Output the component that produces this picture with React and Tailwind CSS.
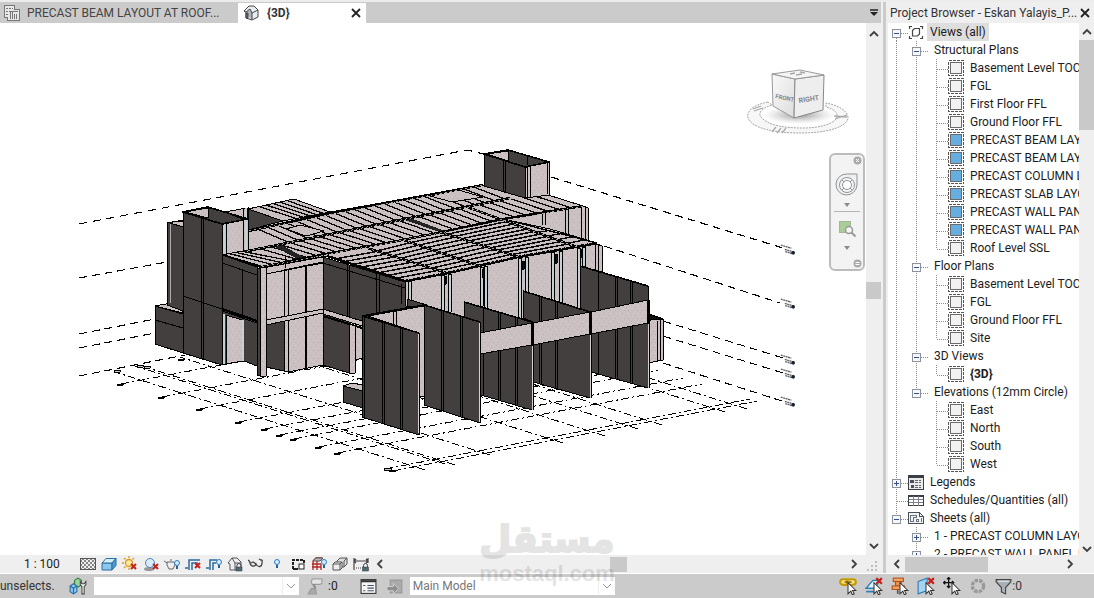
import React from "react";

const DARK = "#433f3e";
const LIGHT = "url(#concrete)";
const STEEL = "#c5d0d2";

const lerp = (a, b, t) => [a[0] + (b[0] - a[0]) * t, a[1] + (b[1] - a[1]) * t];

function Face({ p, fill = DARK }) {
  return <polygon points={p} fill={fill} stroke="#000" strokeWidth="1" />;
}

/* Evenly spaced joints between edge a-b and edge c-d */
function Ribs({ a, b, c, d, n, w = 1.3 }) {
  let path = "";
  for (let i = 1; i < n; i++) {
    const p = lerp(a, b, i / n);
    const q = lerp(c, d, i / n);
    path += `M${p[0]} ${p[1]}L${q[0]} ${q[1]}`;
  }
  return <path d={path} stroke="#0b0b0b" strokeWidth={w} fill="none" />;
}

const gridHeads = [
  [121, 384], [162, 397], [200, 409], [239, 422], [265, 429],
  [280, 435], [294, 439], [319, 447], [338, 453],
];
const gridEnds = [
  [425, 470], [445, 464], [455, 465], [490, 455], [563, 443],
  [605, 436], [638, 429], [662, 425], [725, 412], [747, 409],
];
const levelTags = [[787, 249], [787, 303], [787, 359], [787, 373], [787, 401]];

const columns = [
  [408, 281, 304], [441, 275, 310], [448, 274, 312], [480, 267, 306], [484, 266, 308],
  [518, 258, 318], [525, 257, 293], [551, 252, 300], [559, 251, 303], [577, 248, 308], [582, 247, 268],
];

function Model() {
  return (
    <svg className="block h-full w-full" viewBox="0 23 866 532" preserveAspectRatio="xMinYMin meet" role="img" aria-label="3D structural model">
      <defs>
        <pattern id="concrete" width="9" height="8" patternUnits="userSpaceOnUse">
          <rect width="9" height="8" fill="#cbc1c2" />
          <path d="M1 1h1v1h-1zM5 3h1v1h-1zM3 6h1v1h-1zM7 6h1v1h-1z" fill="#b9afb0" />
          <path d="M7 1h1v1h-1zM2 4h1v1h-1z" fill="#d6cccd" />
        </pattern>
      </defs>
      <g shapeRendering="crispEdges" strokeLinejoin="round">
        {/* level lines */}
        <g stroke="#000" strokeWidth="1.1" fill="none">
          <path d="M79 224L467 150L484 154" strokeDasharray="8 6" />
          <path d="M551 177L783 248M79 278L167 262M604 246L780 303M79 334L155 319M663 321L783 358M79 348L155 333M663 336L783 373M79 376L185 355M663 363L785 402" strokeDasharray="8 5" />
        </g>
        {/* grids */}
        <g stroke="#000" strokeWidth="1" fill="none" strokeDasharray="8 3 2 3">
          {gridHeads.map(([x, y]) => <path key={x} d={`M${x} ${y}l364 -69`} />)}
          {gridEnds.map(([x, y]) => <path key={x} d={`M${x} ${y}l-310 -98`} />)}
          <path d="M385 469L750 399M393 471L757 401" />
        </g>
        <g fill="#ccc" stroke="#000">
          {gridHeads.map(([x, y]) => <path key={x} d={`M${x - 4} ${y}h6v1h-6z`} />)}
          <path d="M384 468h7v2h-7zM389 470h7v1h-7zM114 370h6v2h-6zM137 365h6v2h-6zM144 366h6v2h-6zM178 359h6v1h-6z" />
        </g>

        {/* plinth and rear panels at the left */}
        <Face p="155,306 182,301 183,313" fill={LIGHT} />
        <Face p="155,306 183,314 183,353 155,344" />
        <path d="M155 320L183 328" stroke="#000" />
        <Face p="167,223 183,220 183,311 167,305" />
        <path d="M170 224V303" stroke="#aaa" />
        <Face p="170,223 176,221 183,222 183,227" fill={LIGHT} />

        {/* roof surfaces */}
        <Face p="503,219 541,213 583,206 588,208 588,244 550,236" fill={LIGHT} />
        <path d="M542 213v12M545 213v12M565 210v25M568 210v26M581 206v32M585 206v34" stroke="#000" />
        <Face p="248,209 294,199 330,212 283,222" fill={LIGHT} />
        <Face p="248,209 283,221 248,230" />
        <Face p="222,255 247,250 248,230 283,221 330,212 483,185 525,197 545,194 583,206 542,213 503,219 550,229 597,243 517,257 447,273 405,281 327,256 262,267" fill={LIGHT} />
        <Ribs a={[252, 208]} b={[294, 199]} c={[290, 220]} d={[330, 212]} n={6} />
        <Ribs a={[248, 231]} b={[483, 185]} c={[278, 244]} d={[515, 197]} n={24} />
        <Ribs a={[248, 250]} b={[467, 206]} c={[290, 262]} d={[500, 219]} n={22} />
        <Ribs a={[224, 255]} b={[248, 250]} c={[262, 266]} d={[300, 259]} n={4} />
        <Ribs a={[467, 206]} b={[545, 194]} c={[503, 219]} d={[583, 206]} n={7} />
        <Ribs a={[367, 249]} b={[447, 273]} c={[327, 256]} d={[405, 281]} n={9} w={1.5} />
        <Ribs a={[403, 240]} b={[480, 266]} c={[367, 249]} d={[447, 273]} n={10} w={1.5} />
        <Ribs a={[440, 232]} b={[518, 257]} c={[403, 240]} d={[480, 266]} n={10} w={1.5} />
        <Ribs a={[500, 219]} b={[577, 246]} c={[440, 232]} d={[518, 257]} n={11} w={1.5} />
        <Ribs a={[540, 227]} b={[597, 243]} c={[525, 229]} d={[577, 247]} n={5} w={1.3} />
        <Face p="430,196 458,190 483,197 452,202" fill={LIGHT} />
        <Face p="286,229 300,225 324,231 306,236" fill={LIGHT} />
        <path d="M273 246l8 -1l25 13l-8 1zM405 220l8 -1l32 12l-6 1z" fill="#222" />
        <g stroke="#000" strokeWidth="2.4" fill="none">
          <path d="M249 231L330 213L483 185M248 251L360 228L510 198" />
          <path d="M262 267L325 254L403 240L447 231L503 219L583 206" />
          <path d="M367 248L447 273M403 240L480 266M440 232L519 257M467 207L577 247M327 256L405 281M222 255L262 267" />
          <path d="M405 281L447 273L517 257L597 243" strokeDasharray="3 1" />
        </g>
        <path d="M503 219L597 243" stroke="#000" strokeWidth="1.4" />
        <g stroke="#a9a2a2" strokeWidth="1" strokeDasharray="2 3" fill="none">
          <path d="M249 231L483 185M248 251L510 198M262 267L403 240L583 206M367 248L447 273M403 240L480 266M440 232L519 257M467 207L577 247" />
        </g>

        {/* front-left tower */}
        <Face p="183,212 209,208 248,219 222,224" />
        <Face p="185,212 208,208 208,218" fill={LIGHT} />
        <Face p="225,212 247,208 247,218 240,218" fill={LIGHT} />
        <Face p="183,212 222,224 222,365 183,353" />
        <path d="M201 218V359M203 219V359M183 296L222 309" stroke="#000" />
        <Face p="222,224 248,219 248,250 222,255" fill={LIGHT} />
        <path d="M224 224V254M246 208V250" stroke={STEEL} strokeWidth="2" />
        <path d="M226 224V254M243 208V250M248 207V250" stroke="#000" />
        <path d="M183 212L208 207L248 219L222 224Z" fill="none" stroke="#000" strokeWidth="1.6" />

        {/* rear tower */}
        <Face p="484,154 508,150 549,162 525,167" />
        <Face p="487,154 508,151 508,161" fill={LIGHT} />
        <Face p="484,154 525,167 525,198 484,186" />
        <Face p="525,167 549,162 549,195 525,198" fill={LIGHT} />
        <path d="M503 160V192M505 161V192M527 167V197M530 166V197M547 163V194M527 155V165" stroke="#000" />
        <path d="M484 154L508 150L549 162L525 167Z" fill="none" stroke="#000" strokeWidth="1.6" />

        {/* left facade */}
        <Face p="222,255 257,267 257,323 222,311" />
        <path d="M222 263L257 275M242 269V317" stroke="#000" />
        <Face p="222,311 257,323 257,366 244,361 226,364 222,364" />
        <Face p="226,315 242,320 242,361 226,364" fill={LIGHT} />
        <path d="M224 314V364M243 320V361" stroke={STEEL} strokeWidth="2" />
        <path d="M226 315V364M222 312V364" stroke="#000" />
        <path d="M222 309L257 321" stroke="#000" strokeWidth="2.4" />
        <Face p="266,324 284,321 284,371 266,367" />
        <Face p="262,268 323,257 323,311 262,323" fill={LIGHT} />
        <Face p="284,270 323,262 323,365 288,372 284,371" fill={LIGHT} />
        <path d="M266 274L323 263M288 270V372M285 256V268" stroke="#000" />
        <path d="M306 266V368" stroke="#000" strokeWidth="2" />
        <Face p="266,320 323,309 323,313 266,325" fill={LIGHT} />
        <Face p="257,268 260,268 260,376 257,375" />
        <Face p="260,268 266,267 266,376 260,376" fill={LIGHT} />
        <Face p="355,322 363,325 363,358 355,360" fill={LIGHT} />
        <Face p="323,257 405,282 412,312 362,320 362,324 323,311" />
        <path d="M323 263L405 288M347 265V317M349 265V318M376 273V313M379 274V312M401 284V304" stroke="#000" />
        <Face p="323,313 349,322 349,373 323,365" />
        <Face p="323,309 362,321 362,326 323,314" fill={LIGHT} />
        <path d="M323 316L362 328" stroke="#000" strokeWidth="2" />
        <Face p="349,324 355,326 355,373 349,374" fill={LIGHT} />

        {/* front facade below the roof */}
        <Face p="405,282 447,274 517,258 597,244 602,246 602,275 590,345 533,345 482,345 424,320 405,305" fill={LIGHT} />
        {columns.map(([x, t, b]) => (
          <rect key={x} x={x} y={t} width="3" height={b - t} fill={STEEL} stroke="#000" strokeWidth="1" />
        ))}
        <path d="M445 276h1v8h-1zM482 269h2v8h-2zM522 261h2v8h-2zM555 254h2v9h-2zM580 249h1v9h-1z" fill="#111" stroke="#000" />
        <path d="M595 245V273M598 245V274" stroke="#000" />

        {/* right end */}
        <Face p="648,315 663,319 663,360 648,363" fill={LIGHT} />
        <path d="M648 314L663 319L648 320" fill="#111" stroke="#000" strokeWidth="1.4" />
        <path d="M657 321V361M660 320V361" stroke="#000" />

        {/* small plinth */}
        <Face p="343,386 352,383 363,385 363,391" fill={LIGHT} />
        <Face p="343,386 363,391 363,408 343,402" />

        {/* front wall panels */}
        <Face p="580,266 648,286 648,388 591,372 591,312 580,309" />
        <path d="M598 272V374M615 277V378M617 277V379M630 281V382M632 281V383" stroke="#000" />
        <Face p="523,291 590,312 590,398 533,382 533,322 523,318" />
        <path d="M539 296V384M541 297V384M555 301V389M557 302V389" stroke="#000" />
        <Face p="464,302 532,322 532,410 481,395 480,322 464,318" />
        <path d="M483 308V395M498 312V400M500 313V400M515 317V405M517 318V405" stroke="#000" />
        <Face p="591,312 648,300 648,323 591,334" fill={LIGHT} />
        <Face p="533,323 590,312 590,334 533,345" fill={LIGHT} />
        <Face p="480,333 532,323 532,345 480,354" fill={LIGHT} />
        <path d="M532 322V345M590 311V334M648 300V323" stroke="#000" strokeWidth="2.5" />
        <path d="M532 346V410M590 335V398M648 324V388" stroke="#d8cfd0" />
        <path d="M533 346V410M591 335V398M649 300V388" stroke="#000" />
        <path d="M464 302L532 322M523 291L590 312M580 266L648 286" stroke="#000" strokeWidth="1.6" />
        <Face p="407,299 427,305 424,309 407,306" />
        <Face p="368,316 424,306 424,396 419,396 419,333" fill={LIGHT} />
        <path d="M393 310v14M396 310v15" stroke="#000" />
        <Face p="424,305 480,322 480,423 424,405" />
        <path d="M441 310V411M443 311V411M460 316V417M462 316V417" stroke="#000" />
        <Face p="362,316 419,333 419,435 362,417" />
        <path d="M364 317V418M382 322V423M384 322V424M400 327V429M402 328V429" stroke="#000" />
        <path d="M418 334V433M479 323V422" stroke="#d8cfd0" />
        <path d="M362 316L419 333M362 316L424 305L480 322" fill="none" stroke="#000" strokeWidth="1.6" />
      </g>
      {/* level tags */}
      {levelTags.map(([x, y]) => (
        <g key={y} transform={`rotate(16 ${x} ${y})`}>
          <path d={`M${x - 7} ${y - 2}h11M${x - 2} ${y + 1}h8M${x - 1} ${y + 3}h7`} stroke="#666" strokeWidth="1.4" strokeDasharray="2 .5" />
          <circle cx={x + 7} cy={y + 2} r="1.8" fill="#123" />
        </g>
      ))}
    </svg>
  );
}

function ViewCube() {
  return (
    <svg className="block" width="106" height="66" viewBox="0 0 106 66" role="img" aria-label="View cube">
      <defs>
        <linearGradient id="cubeL" x1="0" y1="0" x2="1" y2="1"><stop offset="0" stopColor="#fafafa" /><stop offset="1" stopColor="#dcdcdc" /></linearGradient>
        <radialGradient id="cubeS"><stop offset="0" stopColor="#888" stopOpacity=".9" /><stop offset="1" stopColor="#bbb" stopOpacity="0" /></radialGradient>
      </defs>
      <path d="M21 33C5 36 -1 43 1 49C5 60 30 64 54 64C82 64 102 57 101 48C100 41 90 36 79 34L79 38C86 40 91 43 90 48C88 55 72 59 56 59C40 59 22 57 15 49C11 46 12 40 25 36Z" fill="#f7f7f7" stroke="#a6a6a6" strokeDasharray="2 1" />
      <ellipse cx="52" cy="46" rx="36" ry="9" fill="url(#cubeS)" />
      <path d="M25 5L48 10L47 49L26 37Z" fill="url(#cubeL)" stroke="#999" />
      <path d="M48 10L77 6L76 41L47 49Z" fill="#eee" stroke="#888" />
      <path d="M25 5L53 1L77 6L48 10Z" fill="#f5f5f5" stroke="#999" />
      <path d="M43 5l5 -1M49 6l6 -1M53 3l5 1" stroke="#aaa" strokeWidth="1.5" />
      <g fontFamily="Roboto, sans-serif" fontWeight="bold" fill="#85878c">
        <text x="28" y="29" fontSize="6" transform="rotate(12 28 29)">FRONT</text>
        <text x="52" y="34" fontSize="7" transform="rotate(-9 52 34)">RIGHT</text>
      </g>
      <path d="M6 40l8 -3M7 42l9 -3M87 47l13 1M88 50l12 -4M29 58l-4 5M34 59l-4 5M39 59l-4 5" stroke="#aaa" strokeWidth="1.3" />
    </svg>
  );
}

const Tri = () => <svg className="block" width="6" height="4" viewBox="0 0 6 4"><path d="M0 0h6L3 4z" fill="#8c8c8c" /></svg>;

function NavBar() {
  return (
    <div className="flex h-[118px] w-9 flex-col items-center rounded-md border-2 border-[#bcbcbc] bg-[#f3f3f3]">
      <button aria-label="Close navigation bar" className="mt-px mr-px self-end">
        <svg className="block" width="9" height="9" viewBox="0 0 9 9"><circle cx="4.5" cy="4.5" r="4" fill="#aaa" /><path d="M3 3l3 3M6 3l-3 3" stroke="#fff" /></svg>
      </button>
      <button aria-label="Steering wheel" className="mt-2">
        <svg className="block" width="24" height="24" viewBox="0 0 24 24" fill="#eef0f2" stroke="#909498">
          <path d="M12 1h10v11a10.5 10.5 0 1 1-10-11z" /><circle cx="12" cy="12" r="7.5" fill="#f6f6f6" /><circle cx="12" cy="12" r="4.5" fill="#fff" />
          <path d="M7 7l2 2M17 7l-2 2M7 17l2 -2M17 17l-2 -2" />
        </svg>
      </button>
      <button aria-label="Steering wheel options" className="mt-1.5"><Tri /></button>
      <div className="mt-1 h-px w-[26px] bg-[#b5b5b5]" />
      <button aria-label="Zoom region" className="mt-2">
        <svg className="block" width="18" height="18" viewBox="0 0 18 18"><rect x="1.5" y="1.5" width="11" height="11" fill="#a9cd97" stroke="#a3b59a" /><circle cx="11" cy="10" r="3.5" fill="#f4f4f4" stroke="#999" strokeWidth="1.5" /><path d="M13.5 12.5l4 4" stroke="#999" strokeWidth="2" /></svg>
      </button>
      <button aria-label="Zoom options" className="mt-2"><Tri /></button>
      <button aria-label="Customize" className="mt-auto mr-px mb-px self-end">
        <svg className="block" width="9" height="9" viewBox="0 0 9 9"><circle cx="4.5" cy="4.5" r="4" fill="#aaa" /><path d="M2.5 3.5h4M2.5 5.5h4" stroke="#fff" /></svg>
      </button>
    </div>
  );
}

function Chevron({ dir, color = "#404040" }) {
  const d = { up: "M1 7l4-4l4 4", down: "M1 3l4 4l4-4", left: "M7 1L3 5l4 4", right: "M3 1l4 4l-4 4" }[dir];
  return <svg className="block" width="10" height="10" viewBox="0 0 10 10"><path d={d} fill="none" stroke={color} strokeWidth="1.8" /></svg>;
}

const CloseX = ({ label }) => (
  <button aria-label={label} className="shrink-0">
    <svg className="block" width="10" height="10" viewBox="0 0 10 10"><path d="M1 1l8 8M9 1l-8 8" stroke="#222" strokeWidth="1.8" /></svg>
  </button>
);

/* ---------- Project browser ---------- */

const plan = (label, on, last) => ({ g: ["v", "v", last ? "l" : "t"], icon: on ? "on" : "off", label });
const elev = (label, last) => ({ g: ["v", "n", last ? "l" : "t"], icon: "off", label });

const tree = [
  { g: ["-"], icon: "views", label: "Views (all)", selected: true, top: true },
  { g: ["v", "-"], label: "Structural Plans" },
  plan("Basement Level TOC"), plan("FGL"), plan("First Floor FFL"), plan("Ground Floor FFL"),
  plan("PRECAST BEAM LAYO", true), plan("PRECAST BEAM LAYO", true),
  plan("PRECAST COLUMN L", true), plan("PRECAST SLAB LAYO", true),
  plan("PRECAST WALL PAN", true), plan("PRECAST WALL PAN", true),
  plan("Roof Level SSL", false, true),
  { g: ["v", "-"], label: "Floor Plans" },
  plan("Basement Level TOC"), plan("FGL"), plan("Ground Floor FFL"), plan("Site", false, true),
  { g: ["v", "-"], label: "3D Views" },
  { ...plan("{3D}", false, true), bold: true },
  { g: ["v", "-"], label: "Elevations (12mm Circle)", end: true },
  elev("East"), elev("North"), elev("South"), elev("West", true),
  { g: ["+"], icon: "legend", label: "Legends" },
  { g: ["t"], icon: "schedule", label: "Schedules/Quantities (all)" },
  { g: ["-"], icon: "sheet", label: "Sheets (all)", end: true },
  { g: ["n", "+"], label: "1 - PRECAST COLUMN LAYO" },
  { g: ["n", "+"], label: "2 - PRECAST WALL PANEL L" },
];

function Guide({ type, top, end }) {
  if (type === "n") return <span className="w-5 shrink-0" />;
  const box = type === "+" || type === "-";
  const lines = (
    <svg className="block" width="20" height="18" viewBox="0 0 20 18" shapeRendering="crispEdges">
      <g stroke="#8a8a8a" strokeDasharray="1 1">
        <path d={`M8.5 ${top ? 9 : 0}V${type === "l" || end ? 10 : 18}`} />
        {type !== "v" && <path d="M9 10.5H20" />}
      </g>
      {box && <rect x="4.5" y="6.5" width="8" height="8" fill="#f6f7fa" stroke="#8b929c" />}
      {box && <path d={type === "+" ? "M6 10.5h5M8.5 8v5" : "M6 10.5h5"} stroke="#33518f" />}
    </svg>
  );
  return box
    ? <button className="w-5 shrink-0" aria-label={type === "+" ? "Expand" : "Collapse"}>{lines}</button>
    : <span className="w-5 shrink-0">{lines}</span>;
}

function TreeIcon({ kind }) {
  return (
    <svg className="block shrink-0" width="16" height="18" viewBox="0 0 16 18" fill="none" shapeRendering={kind === "views" ? "auto" : "crispEdges"}>
      {(kind === "on" || kind === "off") && <>
        <rect x=".5" y="1.5" width="15" height="15" stroke="#555" strokeDasharray="3 1" />
        <rect x="2.5" y="3.5" width="11" height="11" fill={kind === "on" ? "#66ade0" : "#f2f2f3"} stroke="#6b6b6b" />
      </>}
      {kind === "views" && <g stroke="#444" strokeWidth="1.2">
        <path d="M1.5 6V3.5H4M12 3.5h2.5V6M1.5 13v2.5H4M12 15.5h2.5V13" />
        <path d="M4.5 7.5l2-2h5v5.5l-2 2h-5z" fill="#fff" />
      </g>}
      {kind === "legend" && <>
        <rect x=".5" y="2.5" width="15" height="14" fill="#e9eaec" stroke="#3b3f46" /><path d="M0 3.5h16" stroke="#3b3f46" strokeWidth="3" />
        <path d="M2 7h4v3h-4zM3 12h3v3h-3z" fill="#4a505a" /><path d="M7 7.5h6M7 9.5h6M7 12.5h6M7 14.5h6" stroke="#666" strokeDasharray="3 1" />
      </>}
      {kind === "schedule" && <>
        <rect x=".5" y="4.5" width="15" height="10" fill="#fff" stroke="#3b3f46" /><path d="M0 5h16" stroke="#3b3f46" strokeWidth="2" />
        <path d="M1 8.5h14M1 11.5h14M5.5 5v10M10.5 5v10" stroke="#7c828c" />
      </>}
      {kind === "sheet" && <>
        <path d="M.5 3.5h11l4 4v7h-15z" fill="#f1f2f4" stroke="#4a4e55" /><path d="M11.5 3.5v4h4" stroke="#4a4e55" />
        <path d="M2.5 12.5v-6h6v2h-3v4zM8.5 12.5v-2h2v2zM13.5 9v4" stroke="#6b7280" />
      </>}
    </svg>
  );
}

function ProjectBrowser() {
  return (
    <aside className="flex w-[208px] shrink-0 flex-col bg-[#efefef]">
      <header className="flex h-[21px] shrink-0 items-center justify-between pr-1 pl-1 text-[#333]">
        <h2 className="whitespace-nowrap">Project Browser - Eskan Yalayis_P...</h2>
        <CloseX label="Close project browser" />
      </header>
      <div className="flex min-h-0 flex-1">
        <ul className="ml-0.5 min-w-0 flex-1 overflow-hidden bg-white">
          {tree.map((r, i) => (
            <li key={i} className="flex h-[18px] items-center overflow-hidden whitespace-nowrap">
              {r.g.map((t, j) => <Guide key={j} type={t} top={r.top} end={r.end && j === r.g.length - 1} />)}
              {r.icon && <TreeIcon kind={r.icon} />}
              <span className={r.selected ? "ml-[3px] bg-[#dedede] px-[3px] leading-[18px]" : r.bold ? "ml-1.5 font-bold" : "ml-1.5"}>{r.label}</span>
            </li>
          ))}
        </ul>
        <div className="flex w-[15px] shrink-0 flex-col items-center justify-between bg-[#efefef]">
          <div className="flex w-full flex-col items-center">
            <button aria-label="Scroll up" className="flex h-[17px] items-center"><Chevron dir="up" /></button>
            <div className="h-[90px] w-full bg-[#c9c9c9]" />
          </div>
          <button aria-label="Scroll down" className="mb-px"><Chevron dir="down" /></button>
        </div>
      </div>
      <div className="mr-[15px] ml-0.5 flex h-[18px] shrink-0 items-center justify-between bg-[#efefef]">
        <div className="flex items-center">
          <button aria-label="Scroll left" className="flex w-[17px] justify-center"><Chevron dir="left" /></button>
          <div className="h-[15px] w-[83px] bg-[#c9c9c9]" />
        </div>
        <button aria-label="Scroll right" className="mr-1"><Chevron dir="right" /></button>
      </div>
    </aside>
  );
}

/* ---------- Toolbar icons ---------- */

const Bulb = ({ x = 12, y = 7 }) => <g><circle cx={x} cy={y} r="2.5" fill="#d8efff" stroke="#2b7bbd" /><path d={`M${x} ${y + 3}v3`} stroke="#2b5f8d" strokeWidth="2" /></g>;
const RedX = ({ x = 9, y = 8 }) => <path d={`M${x} ${y}l5 5m0-5l-5 5`} stroke="#c3231c" strokeWidth="2" />;
const Lock = ({ x = 9, y = 9 }) => <g><rect x={x} y={y + 2} width="6" height="4" fill="#4c6d70" stroke="#334" strokeWidth=".5" /><path d={`M${x + 1} ${y + 2}v-1.5a2 2 0 0 1 4 0v1.5`} stroke="#445" /></g>;

const viewIcons = [
  ["Detail level", <g shapeRendering="crispEdges"><rect x=".5" y="2.5" width="15" height="11" fill="url(#check)" stroke="#555" /></g>],
  ["Visual style", <g stroke="#2a6ea2"><path d="M1 7h10v7H1z" fill="#8cc6ee" /><path d="M1 7l4-4.5h10L11 7z" fill="#d6edfb" /><path d="M11 7l4-4.5v7L11 14z" fill="#4c9ad3" /></g>],
  ["Sun path off", <g><circle cx="7" cy="7" r="3.5" fill="#ffe9a0" stroke="#d99a1a" strokeWidth="1.3" /><path d="M7 0v2M7 12v2M0 7h2M2 2l1.5 1.5M12 2l-1.5 1.5M2 12l1.5-1.5" stroke="#d99a1a" strokeWidth="1.3" /><RedX /></g>],
  ["Shadows off", <g><ellipse cx="6" cy="13" rx="5" ry="2" fill="#999" /><circle cx="7" cy="7" r="4.5" fill="#d9ecfa" stroke="#4c85b8" /><RedX x={10} /></g>],
  ["Rendering dialog", <g><path d="M3 6h7l1 3-2 4H5L3 9zM0 5l3 2M6 4h2" fill="#eee" stroke="#666" /><Bulb x={13} /></g>],
  ["Crop view", <g><path d="M0 12h3M4 14V4h11M7 14V7h6" stroke="#2d6c9e" strokeWidth="1.5" /><RedX x={10} y={7} /></g>],
  ["Show crop region", <g><path d="M0 12h3M4 14V4h7M7 14V7h3" stroke="#2d6c9e" strokeWidth="1.5" /><Bulb x={13} y={6} /></g>],
  ["Locked 3D view", <g><path d="M1 7l4-5h5l4 4v8H3V8zM5 2l3 5v7M8 7h6" fill="#eee" stroke="#555" /><Lock /></g>],
  ["Temporary hide", <g><path d="M0 4c1 1 2 1 2 3c1 4 5 4 6 1c2 4 6 3 6-1c0-2 1-3-1-3l-2-1M8 8L5 6L3 7" fill="none" stroke="#444" strokeWidth="1.3" /></g>],
  ["Reveal hidden elements", <Bulb x={8} y={6} />],
  ["Worksharing display", <g><path d="M3 13V4h11v3" stroke="#222" strokeWidth="2" strokeDasharray="3 1" /><path d="M3 13h5" stroke="#222" strokeWidth="2" /><rect x="9" y="8" width="5" height="5" fill="#fff" stroke="#222" /></g>],
  ["Temporary view properties", <g><path d="M2 14V5l3-3h6M6 14V5M1 8h9M1 11h9M10 14V8" stroke="#b02a24" strokeWidth="1.3" /><path d="M2 5l3-3h7L9 5z" fill="#bbb" stroke="#555" /><Bulb x={13} y={6} /></g>],
  ["Analytical model", <g stroke="#555"><path d="M5 5l3-3h7v6l-3 3H5z" fill="#ddd" /><path d="M1 8l2-2h7v6l-2 2H1zM1 8h7v6M8 8l2-2M12 5v6M12 5l3-3" fill="#eee" /></g>],
  ["Constraints", <g><path d="M1 2v12M15 2v5M1 5h14M3 3L1 5l2 2M13 3l2 2-2 2" stroke="#444" strokeWidth="1.2" /><path d="M3 12h6" stroke="#444" strokeDasharray="1 1" /><Lock x={9.5} /></g>],
];

const Arrow = () => <path d="M8 5v10l2.5-2.5L12 16l1.5-1-1.5-3h3z" fill="#fff" stroke="#333" strokeWidth=".9" />;

const selectIcons = [
  ["Select links", <g><rect x="1" y="2" width="8" height="5" rx="2.5" stroke="#c79a00" strokeWidth="1.8" fill="#f4e08a" /><rect x="7" y="2" width="8" height="5" rx="2.5" stroke="#c79a00" strokeWidth="1.8" fill="#f4e08a" /><path d="M5 4.5h6" stroke="#8a6c00" strokeWidth="1.5" /><Arrow /></g>],
  ["Select underlay elements", <g><path d="M1 10l6-7h6l-4 7z" stroke="#2f7fb8" strokeWidth="1.2" fill="#e2f2fb" /><path d="M1 13h8" stroke="#2f7fb8" strokeWidth="1.5" /><RedX x={10} y={1} /><Arrow /></g>],
  ["Select pinned elements", <g><path d="M6 11v4" stroke="#555" strokeWidth="1.5" /><rect x="2" y="1" width="9" height="3" fill="#f6a868" stroke="#b3541a" /><rect x="4" y="4" width="5" height="4" fill="#ef9350" stroke="#b3541a" /><rect x="1" y="8" width="11" height="3" fill="#f6a868" stroke="#b3541a" /><Arrow /></g>],
  ["Select elements by face", <g><path d="M1 4l8-3v11l-8 3z" fill="#a5d3f0" stroke="#2f7fb8" /><RedX x={10} y={1} /><Arrow /></g>],
  ["Drag elements on selection", <g><path d="M5 0v10M0 5h10M3.5 2L5 .5 6.5 2M2 3.5L.5 5 2 6.5M8 3.5L9.5 5 8 6.5M3.5 8L5 9.5 6.5 8" stroke="#111" strokeWidth="1.1" /><Arrow /></g>],
  ["Background processes", <circle cx="8" cy="8" r="5" stroke="#999" strokeWidth="3" strokeDasharray="3 1" />],
];

function Ico({ children, size = 16 }) {
  return <svg className="block shrink-0" width={size} height={size} viewBox="0 0 16 16" fill="none">{children}</svg>;
}

function ViewBar() {
  return (
    <div className="flex h-[18px] shrink-0 items-center bg-[#efefef] pl-6">
      <button className="w-[53px] text-left whitespace-nowrap text-[#222]">1 : 100</button>
      <svg width="0" height="0" className="absolute" aria-hidden="true"><defs><pattern id="check" width="4" height="4" patternUnits="userSpaceOnUse"><rect width="4" height="4" fill="#eee" /><path d="M0 0h2v2H0zM2 2h2v2H2z" fill="#888" /></pattern></defs></svg>
      {viewIcons.map(([name, art]) => (
        <button key={name} aria-label={name} className="flex w-[21px] shrink-0 justify-center"><Ico>{art}</Ico></button>
      ))}
      <button aria-label="Scroll left" className="ml-1"><Chevron dir="left" /></button>
      <div className="flex h-full flex-1 items-center">
        <div className="h-[15px] w-[225px] shrink" />
        <div className="h-[15px] w-[17px] bg-[#c9c9c9]" />
      </div>
      <button aria-label="Scroll right" className="mr-1"><Chevron dir="right" /></button>
      <svg className="block shrink-0" width="18" height="18" viewBox="0 0 18 18" shapeRendering="crispEdges"><path d="M12 6h2v2h-2zM8 10h2v2h-2zM12 10h2v2h-2zM4 14h2v2h-2zM8 14h2v2h-2zM12 14h2v2h-2z" fill="#bdbdbd" /></svg>
    </div>
  );
}

function Combo({ label, value }) {
  return (
    <div className="grid w-[205px] shrink-0 items-center bg-white">
      <select aria-label={label} className="col-start-1 row-start-1 h-[18px] w-full appearance-none bg-transparent pr-5 pl-[3px] leading-[18px] text-[#777]"><option>{value}</option></select>
      <span className="pointer-events-none col-start-1 row-start-1 flex h-[18px] w-[17px] items-center justify-center justify-self-end border-l border-[#eee]">
        <svg width="8" height="6" viewBox="0 0 8 6"><path d="M0 1l4 4l4-4" fill="none" stroke="#999" /></svg>
      </span>
    </div>
  );
}

function StatusBar() {
  return (
    <footer className="flex h-6 shrink-0 items-center bg-[#cbcbcb] text-[#333]">
      <span className="w-[69px] shrink-0 whitespace-nowrap">unselects.</span>
      <button aria-label="Worksets" className="w-[25px] shrink-0">
        <Ico size={18}><path d="M5 3l3-2 3 2v4L8 9 5 7z" fill="#9ad69a" stroke="#2f7d36" /><path d="M1 8l3-2 3 2v5l-3 2-3-2z" fill="#8cc8ee" stroke="#2a6ea2" /><path d="M1 8l3 2 3-2M4 10v5" stroke="#2a6ea2" /><path d="M10 4v3l1.5 1.5V15h2V8.5L15 7V4l-1.5 2h-2z" stroke="#444" strokeWidth=".9" fill="#f2f2f2" /></Ico>
      </button>
      <Combo label="Active workset" value="" />
      <button aria-label="Editing requests" className="ml-2 flex shrink-0 items-center gap-1">
        <Ico size={17}><path d="M5 1h9v4l-2 1H5L4 4z" fill="#e4e4e4" stroke="#999" /><path d="M6 6l2 4" stroke="#888" strokeWidth="2" /><path d="M1 15l3-5h4l1 5z" fill="#aaa" stroke="#999" /></Ico><span className="text-[#222]">:0</span>
      </button>
      <div className="ml-[22px] flex shrink-0 gap-[10px]">
        <button aria-label="Design options"><Ico size={17}><rect x="1" y="1.5" width="14" height="13" fill="#f4f4f4" stroke="#333" /><path d="M1 3h14" stroke="#333" strokeWidth="2" /><path d="M3 7h2M3 12h2M7 7h6M7 9.5h6M7 12h6" stroke="#456" /></Ico></button>
        <button aria-label="Add to set"><Ico size={17}><path d="M3 2h11v12H3z" fill="#aaa" stroke="#999" /><path d="M0 8h6V5l5 5-5 5v-3H0z" fill="#8f8f8f" stroke="#ddd" strokeWidth=".7" /></Ico></button>
      </div>
      <div className="ml-1.5 shrink-0"><Combo label="Design option" value="Main Model" /></div>
      <div className="mr-[72px] ml-auto flex shrink-0 items-center gap-2">
        {selectIcons.map(([name, art]) => <button key={name} aria-label={name}><Ico size={18}>{art}</Ico></button>)}
        <button aria-label="Filter" className="flex items-center"><Ico size={17}><path d="M1 1.5h14v2L10 9v6l-4-2V9L1 3.5z" fill="#a9b0b8" stroke="#444" /><path d="M3 3h10" stroke="#eee" /></Ico><span>:0</span></button>
      </div>
    </footer>
  );
}

export default function App() {
  return (
    <div className="relative flex h-screen flex-col overflow-hidden bg-[#ececec] pt-0.5 font-[Roboto,'Open_Sans',sans-serif] text-[12px] leading-[16px] text-[#1c1c1c]">
      <div className="flex min-h-0 flex-1">
        <main className="flex min-w-0 flex-1 flex-col bg-white">
          <div className="flex h-[21px] shrink-0 items-stretch bg-[#cbcbcb]">
            <button className="flex w-[238px] items-center gap-[7px] pl-1 whitespace-nowrap text-[#444]">
              <Ico><g stroke="#777" shapeRendering="crispEdges"><path d="M.5 .5h10v4h5v11h-12v-3h-3z" fill="#e5e7e9" /><path d="M2 3.5h2M5 3.5h2M8 3.5h1M2 6.5h2M2 9.5h2M6.5 7v7M8.5 7v7M10.5 9v5M12.5 9v5M5 6.5h9" /></g></Ico>
              PRECAST BEAM LAYOUT AT ROOF...
            </button>
            <div className="mt-px flex w-32 items-center bg-white pr-[5px] pl-[5px]">
              <button className="flex items-center gap-2 font-bold text-[#333]">
                <Ico><g stroke="#444"><path d="M1 6l5-5h5l4 4v7l-6 3-6-2V8z" fill="#e8ecf0" /><path d="M1 6l2 1 4-3 2 4v7M9 8l6-3" fill="#aeb6bf" /><path d="M3 8h2v5H3z" fill="#667" /></g></Ico>
                {"{3D}"}
              </button>
              <span className="ml-auto flex"><CloseX label="Close tab" /></span>
            </div>
            <button aria-label="Tab list" className="mr-[3px] ml-auto flex items-center">
              <svg className="block" width="8" height="8" viewBox="0 0 8 8"><path d="M0 1h8" stroke="#222" strokeWidth="1.5" /><path d="M0 3h8L4 7z" fill="#222" /></svg>
            </button>
          </div>
          <div className="flex min-h-0 flex-1">
            <div className="relative min-w-0 flex-1 bg-white">
              <Model />
              <div className="absolute top-[46px] right-[13px]"><ViewCube /></div>
              <div className="absolute top-[130px] right-px"><NavBar /></div>
            </div>
            <div className="flex w-[15px] shrink-0 flex-col items-center justify-between bg-[#efefef]">
              <button aria-label="Scroll up" className="mt-1.5"><Chevron dir="up" /></button>
              <div className="h-[17px] w-full bg-[#c9c9c9]" />
              <button aria-label="Scroll down" className="mb-1"><Chevron dir="down" /></button>
            </div>
          </div>
          <ViewBar />
        </main>
        <div className="w-[5px] shrink-0 border-r-3 border-[#cbcbcb] bg-[#efefef]" />
        <ProjectBrowser />
      </div>
      <div className="h-px shrink-0 bg-white" />
      <StatusBar />
      <div className="pointer-events-none absolute bottom-3 left-1/2 flex -translate-x-1/2 flex-col items-center font-bold text-[#000] opacity-10">
        <span dir="rtl" lang="ar" className="font-['DejaVu_Sans',sans-serif] text-[37px] leading-[44px] [-webkit-text-stroke:2px_#000]">مستقل</span>
        <span className="font-['Liberation_Sans',sans-serif] text-[22px] leading-[24px]">mostaql.com</span>
      </div>
    </div>
  );
}
